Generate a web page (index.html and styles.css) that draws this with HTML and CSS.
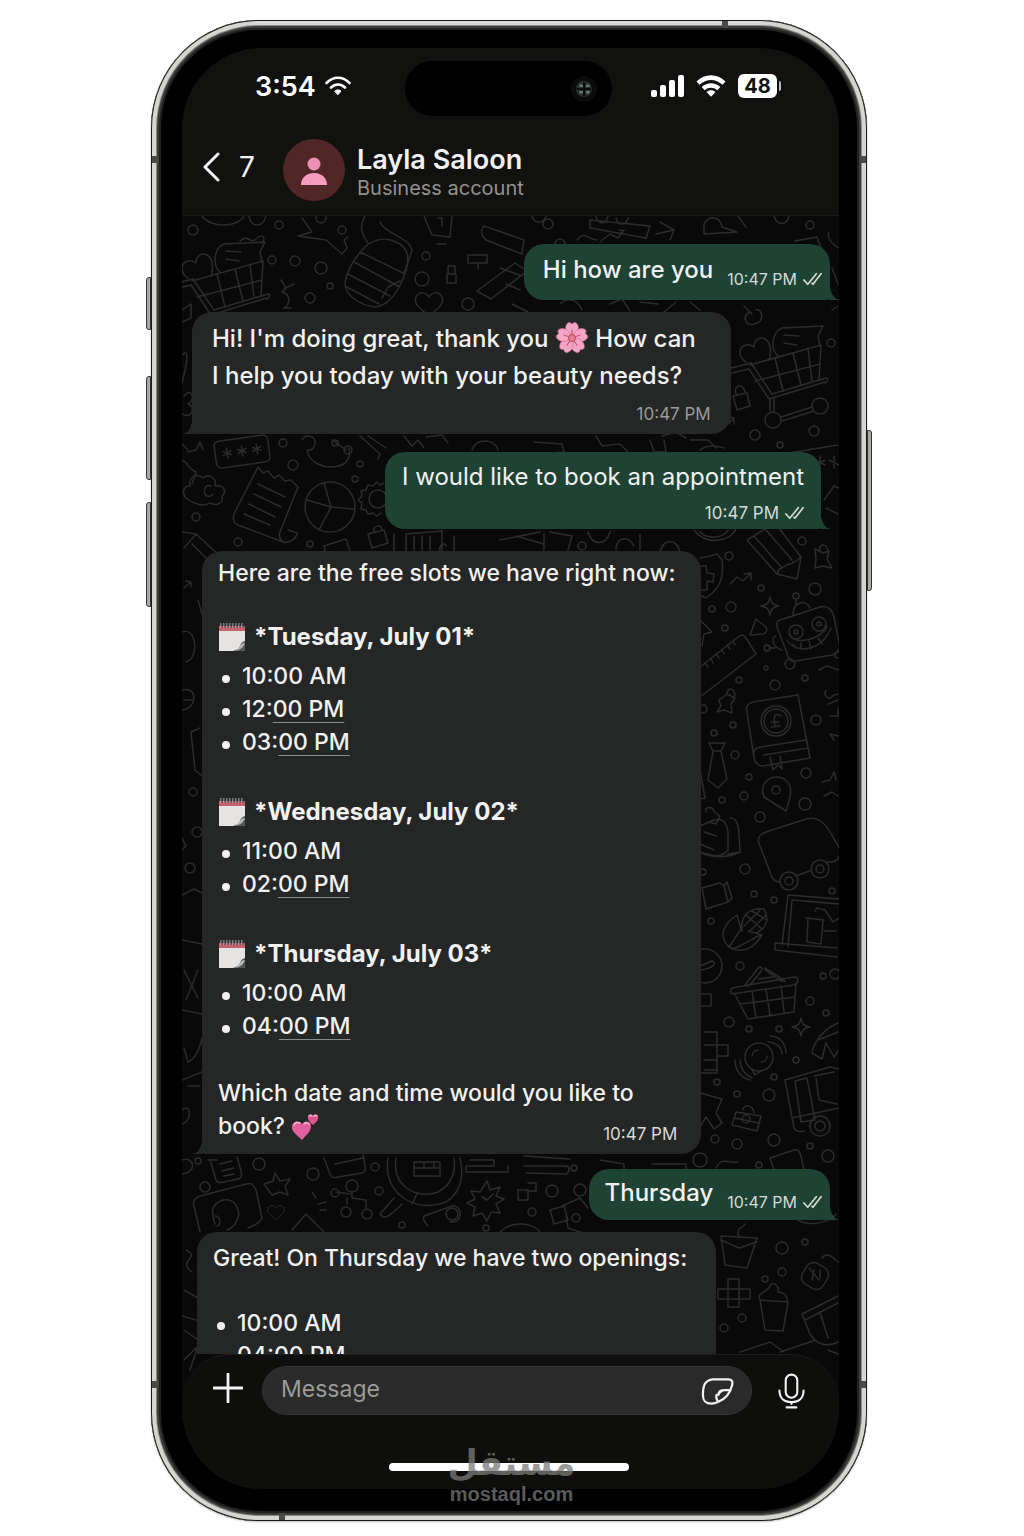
FILE: index.html
```html
<!DOCTYPE html>
<html lang="en">
<head>
    <meta charset="UTF-8">
    <meta name="viewport" content="width=device-width, initial-scale=1.0">
    <title>Layla Saloon - Chat</title>
    <link rel="stylesheet" href="styles.css">
</head>
<body>

    <!-- Shared icons -->
    <svg class="sprite" aria-hidden="true">
        <symbol id="ticks" viewBox="0 0 20 14">
            <path d="M1 8l4 4.500L14 1.500M9.500 11.500l1 1L19 1.500" fill="none" stroke="currentColor" stroke-width="1.800" stroke-linecap="round" stroke-linejoin="round"/>
        </symbol>
        <symbol id="calendar" viewBox="0 0 28 30">
            <path d="M1 4h26v25H1z" fill="#e6e4e2"/>
            <path d="M1 4h26v5H1z" fill="#c4626b"/>
            <path d="M27 19c-3 1-4 2-5 5-1 2-3 4-7 5h12z" fill="#55585a"/>
            <path d="M27 21c-2 5-5 7-10 8 3-2 4-3 5-5 1-2 3-3 5-3z" fill="#b9babb"/>
            <path d="M3 1v5M6 1v5M9 1v5M12 1v5M15 1v5M18 1v5M21 1v5M24 1v5" stroke="#c9c9c9" stroke-width="1"/>
            <path d="M4 1v5M7 1v5M10 1v5M13 1v5M16 1v5M19 1v5M22 1v5M25 1v5" stroke="#333" stroke-width="1"/>
        </symbol>
        <symbol id="wifi" viewBox="0 0 32 24">
            <path d="M1.500 7.500C10-.8 22-.8 30.500 7.500l-3 3.300C20.500 4.300 11.500 4.300 4.500 10.800z"/>
            <path d="M6.700 13c5.500-5 13-5 18.600 0l-3 3.200c-3.700-3.300-9-3.300-12.600 0z"/>
            <path d="M11.500 18c2.700-2.300 6.300-2.300 9 0L16 22.800z"/>
        </symbol>
    </svg>

    <main class="stage">
        <div class="phone">
            <span class="side-button side-button--action"></span>
            <span class="side-button side-button--up"></span>
            <span class="side-button side-button--down"></span>
            <span class="side-button side-button--power"></span>
            <span class="band band--left band--upper"></span>
            <span class="band band--right band--upper"></span>
            <span class="band band--left band--lower"></span>
            <span class="band band--right band--lower"></span>
            <span class="band band--top"></span>
            <span class="band band--bottom"></span>

            <div class="screen">

                <!-- Status bar -->
                <div class="status">
                    <div class="status-left">
                        <span class="clock">3:54</span>
                        <svg class="wifi-small" viewBox="0 0 26 20" fill="none" stroke="currentColor" stroke-width="2.600" stroke-linecap="round">
                            <path d="M1.500 7C8 0 18 0 24.500 7M6 11.500c4-4 10-4 14 0"/>
                            <path d="M10 15c2-1.500 4-1.500 6 0l-3 3.500z" fill="currentColor" stroke-width="1"/>
                        </svg>
                    </div>
                    <div class="island">
                        <svg class="lens" viewBox="0 0 26 26">
                            <circle cx="13" cy="13" r="13" fill="#0b0b0c"/>
                            <circle cx="13" cy="13" r="8" fill="#26312f"/>
                            <path d="M9 8l3 1v2H8zM18 8l-3 1v2h4zM9 18l3-1v-2H8zM18 18l-3-1v-2h4z" fill="#66756f"/>
                            <path d="M13 6v14M6 13h14" stroke="#0b0b0c" stroke-width="2"/>
                        </svg>
                    </div>
                    <div class="status-right">
                        <svg class="signal" viewBox="0 0 33 22" fill="currentColor">
                            <rect x="0" y="15" width="6" height="7" rx="2"/>
                            <rect x="9" y="10" width="6" height="12" rx="2"/>
                            <rect x="18" y="5" width="6" height="17" rx="2"/>
                            <rect x="27" y="0" width="6" height="22" rx="2"/>
                        </svg>
                        <svg class="wifi" fill="currentColor"><use href="#wifi"/></svg>
                        <span class="battery">48</span>
                    </div>
                </div>

                <!-- Chat header -->
                <header class="chat-header">
                    <button class="back" type="button" aria-label="Back">
                        <svg viewBox="0 0 18 30"><path d="M16 2L3 15l13 13" fill="none" stroke="currentColor" stroke-width="3" stroke-linecap="round" stroke-linejoin="round"/></svg>
                        <span>7</span>
                    </button>
                    <svg class="avatar" viewBox="0 0 62 62">
                        <circle cx="31" cy="31" r="31" fill="#502627"/>
                        <circle cx="31" cy="25" r="6.500" fill="#f08fb4"/>
                        <path d="M18 46c0-7 5-12 13-12s13 5 13 12z" fill="#f59cbd"/>
                    </svg>
                    <div class="contact">
                        <h1>Layla Saloon</h1>
                        <p>Business account</p>
                    </div>
                </header>

                <div class="conversation">
                    <!-- Doodle wallpaper -->
                    <svg class="wallpaper" viewBox="182 216 657 1273" preserveAspectRatio="xMidYMin slice" aria-hidden="true">
                        <defs>
                            <g id="cart">
                                <path d="M732 373l17-4 20 30 56-17M731 368l20-5 21 31 54-16c3 0 2 4-1 5"/>
                                <path d="M750 365l71-20-2 35M755 381l65-17M775 358l8 33M793 353l8 32M808 349l4 32"/>
                                <path d="M770 399v12M774 399v12M781 417l31-10M782 421l32-10"/>
                                <circle cx="773" cy="420" r="8"/><circle cx="820" cy="406" r="8"/>
                                <path d="M746 362c-8-5-8-15 0-17 4-1 6 0 8 2 0-7 6-11 11-8 7 4 6 15 4 21M778 356c-8-7-6-24 4-28l41-2-5 10 2 10M784 335l15 1M784 343l13 2"/>
                            </g>
                            <path id="heart" d="M0 16C-8 9-16 4-13-3c3-6 10-5 13 0 3-5 10-6 13 0 3 7-5 12-13 19z"/>
                            <path id="spark" d="M0-9c1 6 3 8 9 9-6 1-8 3-9 9-1-6-3-8-9-9 6-1 8-3 9-9z"/>
                        </defs>
                        <g class="doodles">
                            <use href="#cart"/>
                            <use href="#cart" x="-558" y="-84"/>

                            <!-- upper left -->
                            <path d="M202 216c8 12 36 12 42 0M249 216c2 12 14 12 17 0M240 241c8-8 10 4 16-2 7-7 10 0 6 4M302 218l10 14-14 4 28 4 16 14 5-6-3-8 4-3M365 216c-8 14 0 22 3 27M380 222c5 12 28 14 32 28l-8 24M424 216l8 19 18 2 2-21M438 218l4 0v8M437 244h9"/>
                            <path d="M366 246c9-7 20-9 30-4 14 6 14 18 8 34-7 18-17 30-29 31-16-2-30-12-30-24 2-14 10-26 21-37zM360 252l45 22M354 262l44 24M348 274l42 22M345 286l34 18M382 298l6-11 12-6"/>
                            <path d="M484 226l40 14-2 14-36-14c-5-4-6-10-2-14zM477 291l38-28 12 8-36 28zM448 266h7v8h-7zM447 274h9v9h-9zM468 255h19v8h-19zM478 263v6M281 280l5 8-4 4c8 2 9 10 3 16M286 288l8-4M283 308h8"/>
                            <use href="#heart" x="429" y="300"/>
                            <path d="M500 268l22 8M506 284l14 6M532 216c2 8 12 8 14 0M590 220l60 6-4 12-56-10zM596 216c2 9 10 9 12 0M616 218c2 8 10 8 12 0M660 222l14 8M656 234l18-4-4 10M704 232v-8c6-10 16-7 18 3l15 5-33 2zM738 216l8 11M774 216c3 10 13 10 15 0"/>
                            <path d="M577 240c8-10 12 0 20 0M600 242l10-8 8 4 6-8M619 230l4 1M795 241l22-4 5 14M829 232c-3 8 6 14 10 16M832 268l6 16"/>
                            <path d="M512 304l16 8M560 304c8-8 18-4 22 6M610 304l12-5 8 12M640 302l18 2M664 312l12-10M690 302l10 8M744 306l8 8M832 310l6-4"/>

                            <!-- between first and second outgoing -->
                            <g transform="rotate(-8 242 451)"><rect x="215" y="438" width="54" height="27" rx="5"/><path d="M227 446v10M223 449l8 4M231 449l-8 4M242 446v10M238 449l8 4M246 449l-8 4M257 446v10M253 449l8 4M261 449l-8 4"/></g>
                            <path d="M302 440c4-7 14-4 13 4-2 8-8 6-8 6 2 12 16 20 32 16 10-3 12-12 10-18M332 440l14 10M360 436l20 18-2 5M368 436l18 12M404 436l8 10 6-6 6 8M426 437l16-2 6 8M472 450c4-12 22-12 26 0"/>
                            <circle cx="348" cy="450" r="4"/><circle cx="335" cy="443" r="3"/>
                            <path d="M258 467l5 6 5-2 6 7 5-3 6 6 6-1 7 7-18 45c-2 6 2 12 8 10 6-1 9-6 9-9l-9-3M258 467l-24 47c-2 6 1 10 4 11l45 17M258 484l27 13M254 494l27 13M249 504l26 13M244 514l26 11"/>
                            <circle cx="330" cy="507" r="25"/><path d="M324 483l7 24 23 2M331 507l-24-7M331 507l-12 23"/>
                            <circle cx="378" cy="499" r="9"/><path d="M384 483l-4 2-3-3-4 4-5-1-2 5-5 1 1 5-4 4 4 3-1 6 5 1 2 4 5-1 4 3 4-3"/>
                            <path d="M189 500c-8-4-7-14 1-14-2-8 6-14 13-8 6-5 14 0 12 8 9-2 12 6 7 10 2 8-6 10-12 7-6 4-16 1-21-3zM211 486c-6-3-9 7-4 10 3 1 5 0 6-2"/>
                            <path d="M182 460c5 2 8 10 14 12l-4 12M188 452l8-2 4-8 3 8M182 444l6 6M368 534l16-4 4 13-16 5zM374 532c-2-6 6-8 8-3M324 546l22-7 6 18-24 6zM406 534l36-3v22h-36zM500 540l40-8M394 534v18M454 536v16M182 532l14 2-12 14M196 534l26 24M192 544l20 20"/>
                            <path d="M516 536l28 8M544 534v16M550 532l22 4-4 14M588 532c4 14 18 14 22 0M616 550c0-12 12-16 18-4M640 534v16M660 552c4-14 16-14 20 0M694 530c12 16 38 12 42-2M700 532c8 8 24 6 28-2M662 436l14-4 10 6M690 440h18l8 8M700 450c8-6 18-4 24-2M534 442l28 2 2 8-24 2M596 436l6 10 18-2 8 8M650 440l4 12h12l-2-12M776 455l62-10M820 456v12M815 460l10 5M825 460l-10 5M834 456v12M829 460l10 5M824 500l10-14 5 2M826 508l12 6"/>
                            <path d="M733 396l14-3 3 13-13 4zM736 394c-3-9 7-12 9-2M750 312c-10 6-2 15 4 12 12-2 8-16 2-14M182 355c10-10 2 20 0 28M184 396c8-10 12 4 4 8 8 2 4 16-6 10M182 310l9-6v14l-9 4"/>
                            <path d="M440 552c-2-8 6-10 6-6M414 536v14M422 536v14M430 536v14M728 424l6-6-5-1M734 418v6"/>

                            <!-- right column, top half -->
                            <path d="M747 540l30 34 20 5 4-22-26-34zM754 536l28 32M766 530l26 30M777 574c2-8 7-6 8-8 3-4 8 0 8-4 4 0 5-3 8-5"/>
                            <path d="M700 558c8-1 14-3 17-4l5 6c2 16-1 28-16 38l-6-3M700 566h6l1 7 7 1-1 8-6-1v9h-7M730 584l7-7 6 4 8-8M744 574l7-1v7M815 549l8 4 6-2-2 8 5 9-10-2-7 2 1-9zM820 551c-2-8 7-8 8 0"/>
                            <use href="#spark" x="770" y="606"/>
                            <path d="M750 635l6-16 10 8c2 4 0 6-3 7zM700 620l12 12-8 2-2 12"/>
                            <path d="M780 620l40-13c8-2 12 3 14 10l6 30c0 6-4 6-8 8l-36 6c-6 2-8-3-9-8l-10-26c-1-4 0-6 3-7zM793 614c1-14 14-14 17-6M796 600v4M776 636c-4 0-6 10 6 14M769 648h6"/>
                            <circle cx="796" cy="596" r="3"/><circle cx="767" cy="648" r="3"/><circle cx="796" cy="632" r="7"/><circle cx="796" cy="632" r="2"/><circle cx="819" cy="624" r="7"/><circle cx="819" cy="624" r="2"/><circle cx="790" cy="664" r="5"/>
                            <path d="M787 640c8 14 34 12 44-12M790 634c2 12 32 6 37-8M793 644l3 4M801 643v6M809 641l2 8M818 638l4 6"/>
                            <path d="M700 667l38-30c4-3 6-2 8 1l10 16-56 43M705 663l3 4M711 659l2 4M716 654l3 4M722 650l2 4M727 645l3 4M733 641l2 4"/>
                            <path d="M719 700l8-6 8 4-4 6 1 9-8-3-7 2 4-6zM727 694c0-7 7-7 8 2"/>
                            <path d="M747 712c-2-6 2-9 6-10l45-7 12 63-47 8c-6 0-8-4-9-8zM754 756c-1-5 1-8 6-9l46-7M764 755l44-7M770 757l3 13 5-5 4 4-2-13"/>
                            <circle cx="776" cy="721" r="15"/><circle cx="776" cy="721" r="12"/><path d="M781 716c-6-4-8 0-6 9M771 722h8M771 727l9-1"/>
                            <path d="M709 743h16l-4 8h-8zM713 751l-5 29 10 8 9-9-6-28M700 770l5 28-5 1"/>
                            <path d="M764 797c-6-16 10-24 20-18 9 6 8 14 2 32z"/><circle cx="776" cy="790" r="4"/>
                            <path d="M819 670l8-4 12 4M826 690c-4 8 6 10 6 6l6-2M828 704l10-4M830 716h8v-8M834 740l-4-6 8 2M822 782l8-2 4-8 2 8M824 796l8-4 6 4M838 650c-6 6-2 8 0 8"/>

                            <!-- right column, van to basket -->
                            <path d="M700 826l14-6c10-2 12 2 14 12v18c-8 10-20 4-28 2M730 818c8 0 9 6 10 34l-12 2M706 812c-2-6 8-6 8 0l6 4-4 8-8-2M704 832l12 4M700 844l14 6"/>
                            <path d="M760 846c-4-8 0-12 6-14l40-13c14-4 22 8 28 20l6 10M760 846l10 26c2 8 6 10 10 10M796 876l16-6M827 862c8 0 12-2 12-6"/>
                            <circle cx="789" cy="881" r="9"/><circle cx="789" cy="881" r="4"/><circle cx="820" cy="869" r="9"/><circle cx="820" cy="869" r="4"/>
                            <path d="M702 888l18-5 4 3 4 16-22 7zM724 886l3-4 5 16-4 4M700 853c12 4 26 6 40-1"/>
                            <path d="M729 947c-12-12-4-24 8-32l4 14zM732 949c12-4 22-12 29-14M729 947c14 8 26 0 33-12l-14-4M742 931c-2-16 8-24 22-22 6 10 2 20-8 24M746 915l16 14M752 911l13 8M744 926l16-16M750 931l16-16"/>
                            <path d="M782 945l6-50 51 4M788 947l4-47 47 4M775 943l62 5M775 943v7l62 7M808 918l15 2-2 24-14-2zM815 911l2-3 8 2 8 12 6-4M806 918l18 2M824 931h12"/>
                            <circle cx="705" cy="966" r="17"/><path d="M700 966l12-5c6 2 0 8-12 9M700 994h11v12h-11"/>
                            <path d="M732 988l62-11c6 0 4 7 0 8l-62 9c-2-2-2-5 0-6zM734 993l14 26 46-7 2-28M740 1004l55-7M752 991l4 27M766 989l4 26M781 986l3 26M745 985l14-18c4 0 4 2 0 7l-10 12zM765 968l20 13-4 0-16-11zM759 979l14-2"/>
                            <path d="M704 1032h13v38h-13M704 1045h13v11h11v-11h-11M704 1060h13v13h-17"/>
                            <circle cx="759" cy="1057" r="14"/><path d="M752 1070l3 5 6-4M752 1056c0-4 4-6 6-6M761 1062c4 0 6-3 6-6M768 1042c8 0 14 6 14 12M770 1036c10 0 16 8 16 17M740 1060c0 8 4 14 12 18M735 1060c0 10 6 18 15 20"/>
                            <use href="#spark" x="801" y="1027"/>
                            <path d="M838 1023c-14 6-24 18-26 30l10 6 4-16 8 14 4-6M818 1040l20-8"/>
                            <path d="M785 1080l45-13 9 2M785 1080l9 48c2 4 6 4 10 3M795 1081l12-3 8 42-14 2zM814 1076l20-4M816 1078l3 22 18 4M792 1118l47-10"/><circle cx="820" cy="1126" r="10"/><circle cx="820" cy="1126" r="5"/>
                            <path d="M736 1112l25 4-4 15-25-6zM743 1110c0-6 10-6 11 3M734 1118l25 5M700 1093l22 6-6 14 6 10-8 6-8-12-6 10"/><circle cx="746" cy="1119" r="4"/>

                            <!-- band under the slots message -->
                            <path d="M208 1160l9 0M210 1160l6 20c1 3 4 3 8 2l14-3c4-1 4-4 3-8l-4-14M220 1164l12-3M222 1171l12-3M224 1176l10-2M264 1184l9-3 2-8 5 8 10-2-5 7 3 9-8-3-8 3z"/>
                            <path d="M194 1206c-2-6 2-8 6-10l46-12c6-2 8 2 10 6l6 28c-2 6-10 8-14 10M194 1206l6 26M215 1224c-4-12-4-20 8-24 10-2 14 4 16 14-2 10-6 14-12 16M215 1216c6 0 6 10 2 10"/>
                            <use href="#heart" transform="translate(276 1210) scale(.6)"/>
                            <path d="M292 1230l14-16 12 12 8 8M312 1192l4 6M318 1204l8-2M320 1210h6M324 1158l6 16c2 4 4 4 8 3l24-4c4-1 4-4 3-8l-2-10M335 1164l28-6M352 1192v6l14 2v8M350 1194l-14-2M347 1198v6"/>
                            <circle cx="352" cy="1186" r="6"/><circle cx="335" cy="1193" r="4"/><circle cx="346" cy="1212" r="5"/><circle cx="367" cy="1214" r="5"/>
                            <path d="M388 1158c-6 36 28 56 58 44 16-10 18-28 14-44M396 1158c-4 28 20 42 42 34 14-8 18-20 16-34M394 1198l-14 16c4 6 8 4 22-10M414 1162h26v14h-26zM424 1162v6h10v-6M414 1168h26"/>
                            <path d="M424 1216l28-10c6-1 8 4 8 8 0 8-6 8-10 8M424 1216c-2 4 2 8 4 10M418 1192l-6 12M524 1156l46 3M524 1166h42c4 0 4 6 0 8l-40-1M470 1160h24v6h-28v6h42v-6"/><circle cx="452" cy="1214" r="6"/>
                            <path d="M487 1181l3 9 10-3-4 9 8 3-8 5 4 9-9-1-4 9-5-8-9 3 2-9-8-4 8-4-4-8 9 1zM482 1197l5 3 6-6M518 1190h10v10h-10zM528 1183h8v8h-8M550 1210l14-4 4 14-14 4zM562 1206l18-8 8 10M566 1214l2 14 18 6M500 1232c12-12 34-10 42 2M600 1160l24 4v12M652 1164h34v8M716 1168c6-12 12-4 22-6M770 1158l24-8c4-1 6 2 7 6l3 14M770 1158l4 12"/>

                            <!-- bottom right -->
                            <path d="M721 1236l36 2-10 30-22-3zM721 1240l18 8 18-6M739 1236c-4-8 4-8 6-12M728 1279h11v28h-11zM718 1289h32v10h-32zM760 1300l28 2-5 29-18-1zM760 1300c-4-8 8-8 10-14 2-6 10 0 8 6 10 2 8 4 10 12"/>
                            <rect x="803" y="1264" width="24" height="24" rx="8" transform="rotate(30 815 1276)"/><path d="M809 1268l10 12M812 1280l2-10M820 1270v8M822 1258c4-6 10-2 16 4M802 1314l36-18M805 1320l33-17M802 1314l8 20c6 10 16 14 28 8M820 1312l8 26M740 1352l30-10 14 10M780 1352l36-12M828 1350l10 4M790 1212c10 18 40 12 46 2"/>

                            <!-- left edge -->
                            <path d="M184 588l7-6-5-1M191 582v5M198 600l4 14M182 632c14-6 18 26 4 30M182 690c16-4 16 18 0 20M184 700h8M200 728l-9 4 4 38 7 6M182 838l4 8-4 4M182 895l12-6 8 4M182 940l20 4M184 970l14 28M198 970l-12 30M182 1010l20 4M184 1048l4 14c8-4 12-14 14-24M182 1080l20-8M188 1086h12M182 1110c10-8 10 12 0 14M182 1160c12-4 16 12 0 14M186 1250c16 8-10 10 6 22M184 1290l14 8M182 1316l14 4M184 1330l14 10M184 1360l14-14-8 24"/>

                            <circle cx="193" cy="230" r="5"/><circle cx="279" cy="225" r="4"/><circle cx="321" cy="218" r="5"/><circle cx="342" cy="230" r="4"/><circle cx="272" cy="260" r="4"/><circle cx="295" cy="261" r="5"/><circle cx="321" cy="268" r="6"/><circle cx="330" cy="286" r="3"/><circle cx="310" cy="298" r="5"/><circle cx="426" cy="256" r="4"/><circle cx="422" cy="279" r="7"/><circle cx="468" cy="304" r="6"/><circle cx="548" cy="224" r="5"/><circle cx="560" cy="244" r="5"/><circle cx="810" cy="225" r="4"/>
                            <circle cx="283" cy="443" r="4"/><circle cx="293" cy="465" r="5"/><circle cx="360" cy="464" r="3"/><circle cx="355" cy="479" r="3"/><circle cx="196" cy="517" r="4"/><circle cx="238" cy="542" r="4"/><circle cx="310" cy="544" r="3"/><circle cx="582" cy="546" r="4"/>
                            <circle cx="831" cy="343" r="4"/><circle cx="755" cy="435" r="5"/><circle cx="780" cy="445" r="3"/><circle cx="814" cy="431" r="5"/><circle cx="802" cy="541" r="4"/><circle cx="729" cy="556" r="4"/><circle cx="761" cy="588" r="3"/><circle cx="815" cy="589" r="6"/><circle cx="712" cy="609" r="3"/><circle cx="731" cy="607" r="5"/><circle cx="725" cy="628" r="3"/><circle cx="766" cy="668" r="2"/><circle cx="739" cy="680" r="3"/><circle cx="775" cy="685" r="5"/><circle cx="805" cy="678" r="3"/><circle cx="703" cy="709" r="4"/><circle cx="733" cy="725" r="3"/><circle cx="714" cy="733" r="3"/><circle cx="816" cy="720" r="5"/><circle cx="735" cy="755" r="4"/><circle cx="749" cy="777" r="3"/><circle cx="806" cy="773" r="5"/><circle cx="744" cy="796" r="4"/><circle cx="722" cy="800" r="3"/><circle cx="805" cy="804" r="6"/><circle cx="760" cy="817" r="5"/>
                            <circle cx="745" cy="869" r="5"/><circle cx="703" cy="872" r="3"/><circle cx="754" cy="894" r="3"/><circle cx="774" cy="900" r="3"/><circle cx="832" cy="891" r="3"/><circle cx="711" cy="921" r="3"/><circle cx="740" cy="966" r="4"/><circle cx="823" cy="976" r="3"/><circle cx="835" cy="974" r="5"/><circle cx="810" cy="1001" r="4"/><circle cx="826" cy="1013" r="3"/><circle cx="729" cy="1022" r="5"/><circle cx="749" cy="1029" r="3"/><circle cx="779" cy="1029" r="3"/><circle cx="796" cy="1060" r="3"/><circle cx="774" cy="1077" r="3"/><circle cx="717" cy="1082" r="3"/><circle cx="737" cy="1094" r="3"/><circle cx="769" cy="1095" r="6"/><circle cx="715" cy="1139" r="4"/><circle cx="737" cy="1144" r="5"/><circle cx="774" cy="1140" r="6"/><circle cx="810" cy="1146" r="3"/><circle cx="828" cy="1156" r="6"/><circle cx="759" cy="1165" r="3"/><circle cx="700" cy="1160" r="7"/>
                            <circle cx="198" cy="1161" r="3"/><circle cx="205" cy="1187" r="5"/><circle cx="259" cy="1164" r="6"/><circle cx="313" cy="1174" r="6"/><circle cx="375" cy="1167" r="4"/><circle cx="379" cy="1191" r="4"/><circle cx="402" cy="1225" r="3"/><circle cx="486" cy="1228" r="3"/><circle cx="552" cy="1191" r="6"/><circle cx="532" cy="1212" r="4"/><circle cx="580" cy="1190" r="6"/><circle cx="576" cy="1218" r="4"/><circle cx="574" cy="1168" r="3"/>
                            <circle cx="782" cy="1248" r="6"/><circle cx="805" cy="1242" r="3"/><circle cx="782" cy="1272" r="4"/><circle cx="765" cy="1279" r="3"/><circle cx="742" cy="1318" r="4"/><circle cx="724" cy="1328" r="4"/><circle cx="193" cy="792" r="4"/><circle cx="190" cy="868" r="5"/><circle cx="197" cy="832" r="5"/>
                        </g>
                    </svg>

                    <!-- Messages -->
                    <div class="messages">
                        <article class="bubble out inline edge">
                            <p>Hi how are you</p>
                            <div class="meta"><time>10:47 PM</time><svg class="ticks"><use href="#ticks"/></svg></div>
                        </article>

                        <article class="bubble in greeting">
                            <p>Hi! I'm doing great, thank you
                                <svg class="emoji flower" viewBox="0 0 34 34" role="img" aria-label="Cherry blossom">
                                    <g fill="#f2a6c3" stroke="#d9709a" stroke-width=".6">
                                        <path id="petal" d="M17 17C11 13 9 7 12 3c1-2 3-2 5 0 2-2 4-2 5 0 3 4 1 10-5 14z"/>
                                        <use href="#petal" transform="rotate(72 17 17)"/>
                                        <use href="#petal" transform="rotate(144 17 17)"/>
                                        <use href="#petal" transform="rotate(216 17 17)"/>
                                        <use href="#petal" transform="rotate(288 17 17)"/>
                                    </g>
                                    <g stroke="#c7527f" stroke-width="1.200" stroke-linecap="round"><path d="M17 17V9M17 17l8-3M17 17l5 7M17 17l-5 7M17 17l-8-3"/></g>
                                    <circle cx="17" cy="17" r="3.500" fill="#e8799f" stroke="#b8503f"/>
                                </svg>
                                How can I&nbsp;help you today with your beauty needs?</p>
                            <div class="meta"><time>10:47 PM</time></div>
                        </article>

                        <article class="bubble out stacked">
                            <p>I would like to book an appointment</p>
                            <div class="meta"><time>10:47 PM</time><svg class="ticks"><use href="#ticks"/></svg></div>
                        </article>

                        <article class="bubble in slots">
                            <p>Here are the free slots we have right now:</p>
                            <h2><svg class="emoji"><use href="#calendar"/></svg>*Tuesday, July 01*</h2>
                            <ul>
                                <li>10:00 AM</li>
                                <li>12:<a href="#">00 PM</a></li>
                                <li>03:<a href="#">00 PM</a></li>
                            </ul>
                            <h2><svg class="emoji"><use href="#calendar"/></svg>*Wednesday, July 02*</h2>
                            <ul>
                                <li>11:00 AM</li>
                                <li>02:<a href="#">00 PM</a></li>
                            </ul>
                            <h2><svg class="emoji"><use href="#calendar"/></svg>*Thursday, July 03*</h2>
                            <ul>
                                <li>10:00 AM</li>
                                <li>04:<a href="#">00 PM</a></li>
                            </ul>
                            <p class="question">Which date and time would you like to book?
                                <svg class="emoji" viewBox="0 0 28 28" role="img" aria-label="Two hearts">
                                    <path d="M11 27C5 21 0 18 1 13c1-5 7-6 10-2 3-4 9-3 9 2 0 6-5 9-9 14z" fill="#e0609c"/>
                                    <path d="M22 12c-3-3-6-5-5-8 1-3 4-3 5-1 1-2 5-2 5 1 1 3-2 5-5 8z" fill="#d9568f"/>
                                    <path d="M3 12c1-3 4-3 6-2M13 11c2-2 4-1 5 0M18 3c1-1 2-1 3 0M23 3c1-1 2-1 3 0" fill="none" stroke="#f4b5d0" stroke-width="1.500" stroke-linecap="round"/>
                                </svg>
                            </p>
                            <div class="meta"><time>10:47 PM</time></div>
                        </article>

                        <article class="bubble out inline edge compact">
                            <p>Thursday</p>
                            <div class="meta"><time>10:47 PM</time><svg class="ticks"><use href="#ticks"/></svg></div>
                        </article>

                        <article class="bubble in openings">
                            <p>Great! On Thursday we have two openings:</p>
                            <ul>
                                <li>10:00 AM</li>
                                <li>04:00 PM</li>
                            </ul>
                        </article>
                    </div>

                    <!-- Composer -->
                    <footer class="composer">
                        <form class="composer-row">
                            <button type="button" class="icon-button attach" aria-label="Attach">
                                <svg viewBox="0 0 32 32"><path d="M16 1v30M1 16h30" stroke="currentColor" stroke-width="3" stroke-linecap="round"/></svg>
                            </button>
                            <div class="field">
                                <input type="text" placeholder="Message" aria-label="Message">
                                <button type="button" class="icon-button sticker" aria-label="Stickers">
                                    <svg viewBox="0 0 34 28" fill="none" stroke="currentColor" stroke-width="2.300" stroke-linecap="round" stroke-linejoin="round">
                                        <path d="M12 2h16c4 0 5 2 4 6-2 9-7 14-14 17-2 1-4 2-7 2-7 0-9-3-9-9C2 8 4 3 12 2z"/>
                                        <path d="M30 13h-6c-4 0-6 2-6 5h-2c-1 2 0 4 1 6M24 13c-3 1-5 2-6 5"/>
                                    </svg>
                                </button>
                            </div>
                            <button type="button" class="icon-button mic" aria-label="Record voice message">
                                <svg viewBox="0 0 28 37" fill="none" stroke="currentColor" stroke-width="2.200" stroke-linecap="round">
                                    <rect x="8" y="1.500" width="12" height="24" rx="6"/>
                                    <path d="M1.500 18c0 8 5 12 12.500 12s12.500-4 12.500-12M14 30v2M9 35.500h10"/>
                                </svg>
                            </button>
                        </form>
                        <div class="home-bar"></div>
                    </footer>
                </div>
            </div>

            <div class="watermark">
                <span lang="ar" dir="rtl">مستقل</span>
                <small>mostaql.com</small>
            </div>
        </div>
    </main>

</body>
</html>
```
FILE: styles.css
```css
* { box-sizing: border-box; }
body { margin: 0; background: #fff; color: #f1f1f1; font-family: Inter, "Liberation Sans", sans-serif; }
h1, h2, p, ul { margin: 0; padding: 0; }
button { padding: 0; border: none; background: none; color: inherit; font: inherit; cursor: pointer; }
svg { display: block; }
.sprite { position: absolute; width: 0; height: 0; }

/* Phone body */
.stage { display: flex; justify-content: center; height: 100vh; min-height: 900px; padding: 20px 6px 15px 0; }
.phone {
    position: relative;
    display: flex;
    width: 100%;
    max-width: 716px;
    padding: 28px 28px 32px 31px;
    border-radius: 108px;
    background: #000;
    box-shadow: inset 0 0 0 1px #1b1b1b, inset 0 0 0 5px #d5d5d2, inset 0 0 0 6px #8b8b89, inset 0 0 0 8px #3c3c3c, inset 0 0 0 10px #202020, 0 1px 2px #bbb;
}
.side-button { position: absolute; left: -5px; width: 5px; border: 1px solid #333; background: #aaa9a5; border-radius: 3px 0 0 3px; }
.side-button--action { top: 257px; height: 53px; }
.side-button--up { top: 356px; height: 104px; }
.side-button--down { top: 482px; height: 105px; }
.side-button--power { left: auto; right: -5px; top: 410px; height: 161px; border-radius: 0 3px 3px 0; }
.band { position: absolute; background: #4a4a48; width: 6px; height: 7px; }
.band--left { left: 1px; }
.band--right { right: 1px; }
.band--upper { top: 136px; }
.band--lower { bottom: 133px; }
.band--top { top: 1px; right: 139px; }
.band--bottom { bottom: 1px; left: 128px; }

.screen { display: flex; flex-direction: column; flex: 1; min-width: 0; border-radius: 80px; background: #111110; overflow: hidden; }

/* Status bar */
.status { display: grid; grid-template-columns: 1fr 207px 1fr; padding: 13px 4px 0 0; color: #fff; }
.status-left, .status-right { display: flex; align-items: center; height: 50px; }
.status-left { gap: 9px; padding-left: 73px; }
.status-right { gap: 11px; justify-content: flex-end; padding-right: 58px; }
.clock { font-size: 27px; font-weight: 600; }
.wifi-small { width: 26px; height: 20px; }
.island { display: flex; align-items: center; justify-content: flex-end; height: 55px; padding-right: 15px; border-radius: 28px; background: #000; }
.lens { width: 26px; height: 26px; }
.signal { width: 33px; height: 22px; }
.wifi { width: 32px; height: 24px; }
.battery { position: relative; width: 39px; border-radius: 6px; background: #fff; color: #111; font-size: 20px; line-height: 24px; font-weight: 700; text-align: center; }
.battery::after { content: ""; position: absolute; right: -4px; top: 7px; width: 2px; height: 10px; border-radius: 0 2px 2px 0; background: #bbb; }

/* Chat header */
.chat-header { display: flex; align-items: center; height: 100px; padding: 8px 20px 0 20px; border-bottom: 1px solid #1a1a1a; }
.back { display: flex; align-items: center; gap: 19px; width: 81px; padding-bottom: 5px; font-size: 28px; }
.back svg { width: 18px; height: 30px; }
.avatar { flex: none; width: 62px; height: 62px; }
.contact { padding: 5px 0 0 12px; }
.contact h1 { font-size: 27px; line-height: 32px; font-weight: 600; }
.contact p { color: #92928f; font-size: 20px; line-height: 24px; }

/* Conversation */
.conversation { position: relative; display: flex; flex-direction: column; flex: 1; min-height: 0; background: #090909; }
.wallpaper { position: absolute; inset: 0; width: 100%; height: 100%; }
.doodles { fill: none; stroke: #2c2c2c; stroke-width: 1.500; stroke-linecap: round; stroke-linejoin: round; }
.messages { position: relative; display: flex; flex-direction: column; flex: 1 1 0; min-height: 0; padding: 28px 0 0; overflow: hidden; }
.bubble { position: relative; flex: none; font-size: 23px; line-height: 33px; border-radius: 20px; }
.in { align-self: flex-start; background: #252626; font-weight: 500; }
.out { align-self: flex-end; background: #1e4233; border-bottom-right-radius: 4px; }
.out p { font-size: 24px; white-space: nowrap; }
.out::after, .greeting::after, .slots::after { content: ""; position: absolute; bottom: 0; width: 10px; height: 20px; }
.out::after { right: -9px; background: radial-gradient(farthest-side at 100% 0, transparent 96%, #1e4233 100%); }
.greeting::after, .slots::after { left: -9px; background: radial-gradient(farthest-side at 0 0, transparent 96%, #252626 100%); }
.meta { display: flex; align-items: center; justify-content: flex-end; gap: 6px; color: #d5dad7; font-size: 17px; line-height: 20px; font-weight: 400; }
.ticks { width: 19px; height: 14px; }
.emoji { display: inline-block; width: 28px; height: 30px; vertical-align: -8px; }

.inline { display: flex; align-items: flex-end; gap: 14px; padding: 9px 8px 11px 19px; font-weight: 500; }
.inline p { padding-bottom: 3px; }
.inline .meta { font-size: 16px; }
.edge { margin-right: 9px; }
.compact { padding: 7px 8px 8px 16px; margin-top: 15px; }
.stacked { margin: 18px 18px 0 0; padding: 8px 17px 6px; }
.stacked .meta { margin-top: 10px; }

.greeting { width: 82%; margin: 12px 0 0 10px; padding: 8px 20px 10px; line-height: 37px; font-size: 24px; border-bottom-left-radius: 4px; }
.greeting .meta { margin-top: 10px; color: #9a9a98; }
.flower { width: 34px; height: 34px; }

.slots { width: 76%; margin: 22px 0 0 20px; padding: 6px 12px 10px 16px; border-bottom-left-radius: 4px; }
.slots h2 { display: flex; align-items: center; gap: 8px; margin: 36px 0 7px; font-size: 24px; line-height: 33px; font-weight: 700; }
.slots p + h2 { margin-top: 30px; }
.slots .question { margin-top: 34px; }
.slots .meta { margin-top: -19px; padding-right: 12px; }
.bubble ul { padding-left: 24px; list-style: none; }
.bubble li { position: relative; }
.bubble li::before { content: ""; position: absolute; left: -20px; top: 15px; width: 8px; height: 8px; border-radius: 50%; background: #f1f1f1; }
.bubble a { color: inherit; text-decoration: underline; text-decoration-color: #8a8a8a; text-decoration-thickness: 1px; text-underline-offset: 5px; }

.openings { width: 79%; margin: 12px 0 0 15px; padding: 10px 16px; }
.openings ul { margin-top: 32px; }
.openings li { line-height: 32px; }

/* Composer */
.composer { position: relative; padding: 11px 34px 18px 31px; border-top: 1px solid #1c1c1b; border-radius: 48px 48px 0 0; background: #0e0e0d; }
.composer-row { display: flex; align-items: center; gap: 19px; }
.icon-button { flex: none; }
.attach { padding-bottom: 6px; }
.attach svg { width: 30px; height: 30px; }
.field { display: flex; align-items: center; flex: 1; min-width: 0; height: 49px; padding: 0 17px 0 18px; border: 1px solid #343434; border-radius: 25px; background: #2a2a2a; }
.field input { flex: 1; min-width: 0; padding: 0 0 3px; border: none; outline: none; background: none; color: #f1f1f1; font: inherit; font-size: 23px; }
.field input::placeholder { color: #9b9b99; opacity: 1; }
.sticker svg { width: 33px; height: 28px; }
.mic { margin-left: 7px; }
.mic svg { width: 27px; height: 36px; }
.home-bar { width: 240px; height: 8px; margin: 48px auto 0; border-radius: 4px; background: #fff; }

/* Watermark */
.watermark { position: absolute; left: 0; right: 0; bottom: 16px; display: flex; flex-direction: column; align-items: center; padding-left: 5px; color: rgba(122, 122, 122, .75); font-family: "DejaVu Sans", sans-serif; font-weight: 700; pointer-events: none; }
.watermark span { font-size: 35px; line-height: 40px; }
.watermark small { font-family: "Liberation Sans", sans-serif; font-size: 20px; line-height: 22px; }
```
